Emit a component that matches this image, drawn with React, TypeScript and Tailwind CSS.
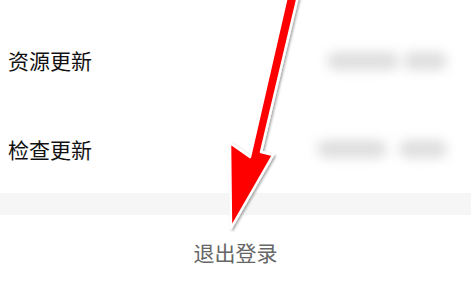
const rows = [
  { label: "资源更新", blobs: [72, 44], gap: "gap-[4px]" },
  { label: "检查更新", blobs: [70, 48], gap: "gap-[12px]" },
];

const Arrow = () => (
  <svg
    className="absolute inset-0 pointer-events-none"
    width="471"
    height="282"
    viewBox="0 0 471 282"
  >
    <defs>
      <filter id="shadow" x="-20%" y="-20%" width="140%" height="140%">
        <feDropShadow dx="1.5" dy="1.5" stdDeviation="1.2" floodColor="#000" floodOpacity="0.35" />
      </filter>
    </defs>
    <polygon
      points="287,-4 298,-4 261,152 273,155 231,228 230,143 250,157"
      fill="#ff0000"
      stroke="#ffffff"
      strokeWidth="2.5"
      strokeLinejoin="round"
      filter="url(#shadow)"
    />
  </svg>
);

const App = () => {
  return (
    <div
      className="relative w-[471px] h-[282px] overflow-hidden bg-white"
      style={{ fontFamily: '"Noto Sans CJK SC", "Noto Sans", sans-serif' }}
    >
      <div className="pt-[16px]">
        {rows.map((row, i) => (
          <div
            key={row.label}
            className={`flex items-center justify-between pl-[8px] pr-[24px] ${
              i === 0 ? "h-[89px]" : "h-[88px]"
            }`}
          >
            <span className="text-[21px] leading-none text-[#111]">{row.label}</span>
            <div className={`flex items-center ${row.gap}`}>
              {row.blobs.map((w, j) => (
                <div
                  key={j}
                  className="h-[18px] rounded-full bg-[#dedede] blur-[6px]"
                  style={{ width: w }}
                />
              ))}
            </div>
          </div>
        ))}
        <div className="h-[22px] bg-[#f6f6f6]" />
        <div className="h-[74px] flex items-center justify-center">
          <span className="text-[21px] leading-none text-[#666]">退出登录</span>
        </div>
      </div>
      <Arrow />
    </div>
  );
};

export default App;
